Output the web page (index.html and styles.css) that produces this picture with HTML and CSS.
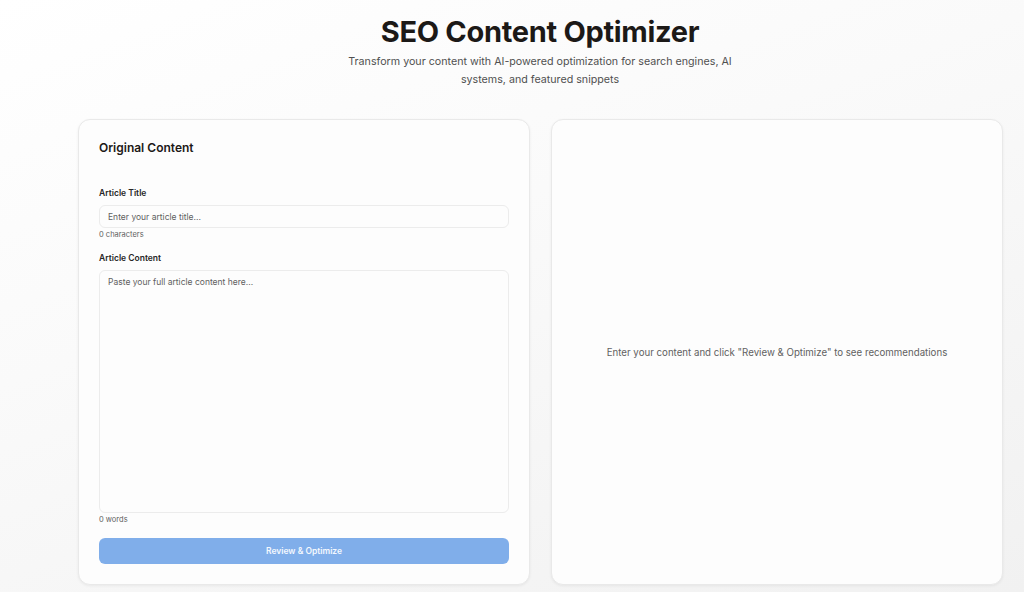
FILE: index.html
```html
<!DOCTYPE html>
<html>
<head>
<meta charset="utf-8">
<link rel="stylesheet" href="styles.css">
</head>
<body>
<div class="page">
  <header class="hero">
    <h1 class="title">SEO Content Optimizer</h1>
    <p class="subtitle">Transform your content with AI-powered optimization for search engines, AI systems, and featured snippets</p>
  </header>
  <main class="grid">
    <section class="card form-card">
      <h2 class="card-title">Original Content</h2>
      <div class="field first">
        <label class="label">Article Title</label>
        <div class="input">Enter your article title...</div>
        <div class="hint">0 characters</div>
      </div>
      <div class="field grow">
        <label class="label">Article Content</label>
        <div class="textarea">Paste your full article content here...</div>
        <div class="hint">0 words</div>
      </div>
      <button class="btn">Review &amp; Optimize</button>
    </section>
    <section class="card result-card">
      <p class="empty">Enter your content and click "Review &amp; Optimize" to see recommendations</p>
    </section>
  </main>
</div>
</body>
</html>
```
FILE: styles.css
```css
* { box-sizing: border-box; margin: 0; padding: 0; }
html, body { height: 100%; }
body {
  font-family: Inter, "Noto Sans", sans-serif;
  background: linear-gradient(160deg, #ffffff 0%, #fafafa 40%, #f1f1f1 100%);
  color: #1a1a1a;
  overflow: hidden;
}
.page {
  padding: 14px 22px 0 78px;
  display: flex;
  flex-direction: column;
}
.hero {
  display: flex;
  flex-direction: column;
  align-items: center;
}
.title {
  font-size: 29px;
  font-weight: 700;
  letter-spacing: -0.3px;
  line-height: 36px;
  color: #1c1917;
}
.subtitle {
  margin-top: 3px;
  max-width: 392px;
  text-align: center;
  font-size: 10.7px;
  line-height: 18px;
  color: #505050;
}
.grid {
  margin-top: 30px;
  display: grid;
  grid-template-columns: 452px 452px;
  column-gap: 21px;
}
.card {
  background: #fdfdfd;
  border: 1px solid #e9e9e9;
  border-radius: 12px;
  box-shadow: 0 1px 3px rgba(0,0,0,0.06);
  height: 466px;
}
.form-card {
  padding: 19px 20px 20px 20px;
  display: flex;
  flex-direction: column;
}
.card-title {
  font-size: 12px;
  font-weight: 600;
  line-height: 18px;
  color: #1c1917;
}
.field { display: flex; flex-direction: column; margin-top: 12px; }
.field.first { margin-top: 30px; }
.field.grow { flex: 1; min-height: 0; }
.label {
  font-size: 8.5px;
  font-weight: 600;
  line-height: 12px;
  color: #262626;
  margin-bottom: 6px;
}
.input {
  height: 23px;
  flex-shrink: 0;
  border: 1px solid #ececec;
  border-radius: 6px;
  background: #fdfdfd;
  font-size: 8.5px;
  color: #5f5f5f;
  padding: 0 8px;
  display: flex;
  align-items: center;
}
.textarea {
  flex: 1;
  min-height: 0;
  border: 1px solid #ececec;
  border-radius: 6px;
  background: #fdfdfd;
  font-size: 8.5px;
  color: #5f5f5f;
  padding: 6px 8px;
}
.hint {
  margin-top: 2px;
  font-size: 7.5px;
  line-height: 10px;
  color: #5f5f5f;
}
.btn {
  margin-top: 13px;
  height: 26px;
  flex-shrink: 0;
  border: none;
  border-radius: 6px;
  background: #80aeea;
  color: #f4f8fe;
  font-family: Inter, sans-serif;
  font-size: 8.5px;
  font-weight: 600;
}
.result-card {
  display: flex;
  align-items: center;
  justify-content: center;
}
.empty {
  font-size: 9.7px;
  color: #616161;
}
```
